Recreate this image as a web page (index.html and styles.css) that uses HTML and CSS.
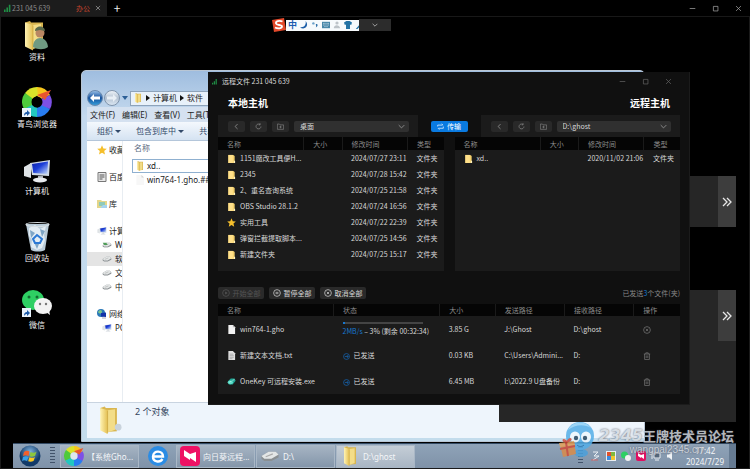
FILE: index.html
```html
<!DOCTYPE html>
<html lang="zh-CN">
<head>
<meta charset="utf-8">
<title>231 045 639</title>
<link rel="stylesheet" href="styles.css">
</head>
<body>
<svg class="defs" aria-hidden="true">
  <defs>
    <linearGradient id="gold" x1="0" x2="1"><stop offset="0" stop-color="#fff3b4"/><stop offset="1" stop-color="#e3bf52"/></linearGradient>
    <linearGradient id="screen" x1="0" x2="1" y2="1"><stop offset="0" stop-color="#0a1ca8"/><stop offset=".45" stop-color="#1c3fd8"/><stop offset="1" stop-color="#c8defa"/></linearGradient>
    <radialGradient id="orb" cy=".3"><stop offset="0" stop-color="#7fb2dc"/><stop offset="1" stop-color="#123a68"/></radialGradient>
    <linearGradient id="nav" x2="0" y2="1"><stop offset="0" stop-color="#9cc3ea"/><stop offset=".5" stop-color="#14509c"/><stop offset="1" stop-color="#37a0dc"/></linearGradient>
    <linearGradient id="navoff" x2="0" y2="1"><stop offset="0" stop-color="#f2f6fa"/><stop offset=".5" stop-color="#b4c2d2"/><stop offset="1" stop-color="#dce8f4"/></linearGradient>
  </defs>
  <symbol id="signal" viewBox="0 0 10 10"><path d="M0 7h2v3H0zM3 4.500h2V10H3zM6 1h2v9H6z"/></symbol>
  <symbol id="close" viewBox="0 0 10 10"><path d="M1.500 1.500l7 7M8.500 1.500l-7 7" fill="none" stroke="currentColor"/></symbol>
  <symbol id="max" viewBox="0 0 10 10"><path d="M2 2h6.500v6.500H2z" fill="none" stroke="currentColor"/></symbol>
  <symbol id="min" viewBox="0 0 10 10"><path d="M1 5h8" stroke="currentColor"/></symbol>
  <symbol id="back" viewBox="0 0 10 10"><path d="M6.500 1.500L3 5l3.500 3.500" fill="none" stroke="currentColor" stroke-width="1.300"/></symbol>
  <symbol id="refresh" viewBox="0 0 10 10"><path d="M8.500 5a3.500 3.500 0 1 1-1.500-2.900M5.500 3l2-.8L7 .2" fill="none" stroke="currentColor"/></symbol>
  <symbol id="newdir" viewBox="0 0 10 10"><path d="M.5 1.500h3l1 1.200h5v6.300h-9zM5 4v3.500M3.200 5.700h3.600" fill="none" stroke="currentColor" stroke-width=".9"/></symbol>
  <symbol id="down" viewBox="0 0 10 10"><path d="M1 3l4 4 4-4" fill="none" stroke="currentColor" stroke-width="1.200"/></symbol>
  <symbol id="swap" viewBox="0 0 10 10"><path d="M1 5V3h7M6.500 1L8.500 3M9 5v2.500H2M3.500 9.500L1.500 7.500" fill="none" stroke="currentColor"/></symbol>
  <symbol id="play" viewBox="0 0 10 10"><circle cx="5" cy="5" r="4.200" fill="none" stroke="currentColor" stroke-width=".9"/><path d="M4 3l3 2-3 2z" fill="currentColor"/></symbol>
  <symbol id="stop" viewBox="0 0 10 10"><circle cx="5" cy="5" r="4.200" fill="none" stroke="currentColor" stroke-width=".9"/><path d="M4 3.500v3M6 3.500v3" stroke="currentColor"/></symbol>
  <symbol id="cancel" viewBox="0 0 10 10"><circle cx="5" cy="5" r="4.200" fill="none" stroke="currentColor" stroke-width=".9"/><path d="M3.500 3.500l3 3M6.500 3.500l-3 3" stroke="currentColor" stroke-width=".9"/></symbol>
  <symbol id="sent" viewBox="0 0 10 10"><circle cx="5" cy="5" r="4.200" fill="none" stroke="currentColor" stroke-width=".9"/><path d="M2.500 5h5M5.500 3l2 2-2 2" fill="none" stroke="currentColor" stroke-width=".9"/></symbol>
  <symbol id="trash" viewBox="0 0 10 10"><path d="M1 2.500h8M3.500 2.500V1h3v1.500M2 2.500V9.300h6V2.500M4 4.300v3.200M6 4.300v3.200" fill="none" stroke="currentColor" stroke-width=".9"/></symbol>
  <symbol id="dir" viewBox="0 0 10 10"><path d="M1.500 1h6v1H8.500v8h-7z" fill="#f3cf6c"/><path d="M1.500 1h5v9h-5z" fill="#ffe08a"/><path d="M7.500 7.500h1.500V10H7.500z" fill="#fff1bd"/></symbol>
  <symbol id="page" viewBox="0 0 10 10"><path d="M1.500 0h5l2.500 2.500V10H1.500z" fill="#f2f2f2"/><path d="M6.500 0v2.500H9z" fill="#b8b8b8"/></symbol>
  <symbol id="txt" viewBox="0 0 10 10"><path d="M1.500 0h5l2.500 2.500V10H1.500z" fill="#dedede"/><path d="M3 3.500h4M3 5.200h4.500M3 7h4.500M3 8.500h3" stroke="#8a8a8a" stroke-width=".6"/></symbol>
  <symbol id="exe" viewBox="0 0 12 10"><path d="M1 5l4-4h5l1.500 3-4 5h-5z" fill="#1fa594"/><ellipse cx="4.500" cy="6" rx="3.500" ry="2.500" fill="#5fdcc8"/><path d="M3 6l3-1.500M7 3.500l3-1" stroke="#d8fff8" stroke-width=".8"/></symbol>
  <symbol id="star" viewBox="0 0 10 10"><path d="M5 .3l1.400 3.200 3.400.3-2.600 2.300.8 3.500L5 7.800 2 9.600l.8-3.500L.2 3.800l3.400-.3z" fill="currentColor"/></symbol>
  <symbol id="folder" viewBox="0 0 24 30"><path d="M3 2l5-1.500 1 1.500h12v25l-12 1z" fill="#d9b650"/><path d="M3 2l8 2.500V30l-8-4z" fill="url(#gold)"/><path d="M11 4.500l8-1v22l-8 3z" fill="#f3dd88"/><path d="M11 5v24" stroke="#c39b34" stroke-width=".6"/></symbol>
  <symbol id="pc" viewBox="0 0 28 24"><path d="M1 8l7-4v15l-7-2z" fill="#dfe3e6"/><path d="M7 4L27 1l-1 16-17-1z" fill="#cfd9e6"/><path d="M9 5l16-2.500-.7 12.500-14-.9z" fill="url(#screen)"/><path d="M15 17h5v3h-5z" fill="#aab0b8"/><ellipse cx="17" cy="21" rx="7" ry="2.500" fill="#e8ebee"/></symbol>
  <symbol id="drive" viewBox="0 0 14 8"><path d="M1 4l5-3h5l2 2v2L8 7.500H3L1 6z" fill="#8a8f92"/><path d="M1 4l5-3h5l2 2-5 3H3z" fill="#e3e6e6"/><path d="M4 4.500l5-2" stroke="#aaa" stroke-width=".8"/></symbol>
  <symbol id="ring" viewBox="0 0 30 30"><path d="M15 0A15 15 0 0 1 28 8L19 12 15 9z" fill="#f7c51c"/><path d="M15 0A15 15 0 0 0 3 6l6 7 7-5z" fill="#d8e32a"/><path d="M3 6A15 15 0 0 0 2 22l8-3 0-8z" fill="#4fca3b"/><path d="M2 22a15 15 0 0 0 13 8l1-9-6-3z" fill="#22c7c0"/><path d="M15 30a15 15 0 0 0 13-8l-8-5-5 4z" fill="#287cf0"/><path d="M28 22A15 15 0 0 0 28 8l-9 4 0 6z" fill="#7d50e6"/><circle cx="15" cy="15" r="5.500" fill="var(--hole)"/><path d="M29 3L15 8l4 2 4 3z" fill="#e8542f"/></symbol>
  <symbol id="shortcut" viewBox="0 0 9 9"><path d="M0 0h9v9H0z" fill="#e8f2fb"/><path d="M2 8C2 5 3 4 5 4V2l3 3-3 3V6C4 6 3 6.500 2 8z" fill="#1c5aa8"/></symbol>
  <symbol id="more" viewBox="0 0 10 10"><path d="M1 1l4 4-4 4M5 1l4 4-4 4" fill="none" stroke="currentColor" stroke-width="1.300"/></symbol>
</svg>

<header class="tabbar">
  <div class="tab"><svg class="i8 green"><use href="#signal"/></svg><span>231 045 639</span><em>办公</em><button aria-label="关闭标签"><svg class="i6"><use href="#close"/></svg></button></div>
  <button class="plus" aria-label="新标签">+</button>
  <div class="wincontrols">
    <button aria-label="最小化"><svg class="i7"><use href="#min"/></svg></button>
    <button aria-label="最大化"><svg class="i7"><use href="#max"/></svg></button>
    <button aria-label="关闭"><svg class="i7"><use href="#close"/></svg></button>
  </div>
</header>

<main class="desktop">
  <div class="screen">
    <ul class="shortcuts">
      <li><svg viewBox="0 0 32 32"><use href="#folder" x="1" y="0" width="24" height="31"/><circle cx="19" cy="13" r="4.500" fill="#b98763"/><path d="M14 11c0-6 10-6 10 0l-5-1z" fill="#5b6b4c"/><path d="M12 27c0-12 14-12 15 0-4 3-10 3-15 0z" fill="#6f9a82"/></svg><span>资料</span></li>
      <li><svg class="dark" viewBox="0 0 32 32"><use href="#ring" x="1" y="0" width="30" height="30"/><use href="#shortcut" x="1" y="21" width="9" height="9"/></svg><span>青鸟浏览器</span></li>
      <li><svg viewBox="0 0 32 32"><use href="#pc" x="2" y="5" width="28" height="24"/></svg><span>计算机</span></li>
      <li><svg viewBox="0 0 32 32"><path d="M5 3h23l-4 26c-4 2-10 2-14 0z" fill="#b9cbd8"/><path d="M8 7l6-3 5 4 6-3-2 9 1 5-3 8-5 2-6-3 1-7-3-4z" fill="#e3edf4"/><path d="M9 9l5 3-4 5zM19 8l5 2-3 6zM13 21l5 2-2 5z" fill="#7fa6c6"/><path d="M12 18l4-4 5 4-2 4h-5z" fill="none" stroke="#2c79d4" stroke-width="2"/><ellipse cx="16.500" cy="3.500" rx="11.500" ry="2" fill="none" stroke="#d7dee2" stroke-width="1.200"/></svg><span>回收站</span></li>
      <li><svg viewBox="0 0 32 32"><ellipse cx="12" cy="12" rx="11" ry="10" fill="#2ecf63"/><path d="M5 19l-1 5 5-3z" fill="#2ecf63"/><circle cx="8" cy="9" r="1.500" fill="#126b30"/><circle cx="16" cy="9" r="1.500" fill="#126b30"/><ellipse cx="22" cy="18" rx="9" ry="8" fill="#f3f3f3"/><path d="M25 24l4 3-1-5z" fill="#f3f3f3"/><circle cx="19" cy="16" r="1.200" fill="#777"/><circle cx="25" cy="16" r="1.200" fill="#777"/><use href="#shortcut" x="1" y="20" width="9" height="9"/></svg><span>微信</span></li>
    </ul>

    <div class="ime">
      <svg class="sogou" viewBox="0 0 14 14"><path d="M0 2l12-2 2 12-12 2z" fill="#e3492b"/><path d="M10.500 3.500C7 2 3.500 3.500 4 5.500s6 1 6 3-4 2.500-7 1" fill="none" stroke="#fff" stroke-width="1.800"/></svg>
      <div class="imebar">
        <b>中</b>
        <svg class="i8" viewBox="0 0 10 10"><path d="M7 0c5 6-1 12-7 8 5 0 8-3 7-8z" fill="#1e5fa8"/></svg>
        <svg class="i8" viewBox="0 0 10 10"><circle cx="3" cy="3" r="1.500" fill="#6aa0c8"/><path d="M6 4c3-1 3 3 0 4 1-2 0-2 0-4z" fill="#2f6fa8"/></svg>
        <svg class="i8" viewBox="0 0 10 10"><path d="M0 1h10v8H0z" fill="#4586a8"/><path d="M1.500 3h7M1.500 5h7M3 7h4" stroke="#d5e6f0" stroke-dasharray="1 .5"/></svg>
        <svg class="i8" viewBox="0 0 10 10"><circle cx="5" cy="2.500" r="2" fill="#bcc3c8"/><path d="M1 9c0-5 7-5 8 0z" fill="#bcc3c8"/></svg>
        <svg class="i8" viewBox="0 0 10 10"><path d="M0 2l3-2h4l3 2-1 3-1.500-.5V10h-5V4.500L1 5z" fill="#2272a4"/></svg>
        <svg class="i8" viewBox="0 0 10 10"><path d="M1 10l5-6V1l3-1v4L3 10z" fill="#2272a4"/></svg>
      </div>
      <button aria-label="展开"><svg class="i6"><use href="#down"/></svg></button>
    </div>

    <section class="explorer">
      <div class="address">
        <svg class="navbtn" viewBox="0 0 16 16"><circle cx="8" cy="8" r="7.500" fill="url(#nav)" stroke="#6b89ad"/><path d="M3 8l4-4v2.500h6v3H7V12z" fill="#fff"/></svg>
        <svg class="navbtn" viewBox="0 0 16 16"><circle cx="8" cy="8" r="7.500" fill="url(#navoff)" stroke="#7f93ab"/><path d="M13 8L9 4v2.500H3v3h6V12z" fill="#e9eff5"/></svg>
        <i class="tri"></i>
        <div class="path"><svg class="i10"><use href="#folder"/></svg><i class="caret"></i><span>计算机</span><i class="caret"></i><span>软件</span></div>
      </div>
      <nav class="menu"><span>文件(F)</span><span>编辑(E)</span><span>查看(V)</span><span>工具(T)</span></nav>
      <div class="tools"><span>组织 <i></i></span><span>包含到库中 <i></i></span><span>共享</span></div>
      <div class="content">
        <ul class="tree">
          <li><svg class="i10 gold"><use href="#star"/></svg>收藏夹</li>
          <li class="gap"><svg class="i10" viewBox="0 0 10 10"><path d="M1 .5h8v9H1z" fill="#e8e8e8" stroke="#777"/><path d="M2.500 3h5M2.500 5h5M2.500 7h3" stroke="#555"/></svg>百度</li>
          <li class="gap"><svg class="i10" viewBox="0 0 10 10"><path d="M0 1h4l1 1h5v7H0z" fill="#e4d68a"/><path d="M2 3h6v4H2z" fill="#8fc9b8"/><path d="M3 9l3-3h4v3z" fill="#a5d3ee"/></svg>库</li>
          <li class="gap"><svg class="i10"><use href="#pc"/></svg>计算机</li>
          <li class="sub"><svg class="i10" viewBox="0 0 14 8"><use href="#drive" width="14" height="8"/><path d="M1 1l5 0 2 3-5 0z" fill="#4f9c58"/></svg>WIN7</li>
          <li class="sub on"><svg class="i10"><use href="#drive"/></svg>软件</li>
          <li class="sub"><svg class="i10"><use href="#drive"/></svg>文档</li>
          <li class="sub"><svg class="i10"><use href="#drive"/></svg>中转</li>
          <li class="gap"><svg class="i10" viewBox="0 0 10 10"><circle cx="4" cy="4" r="4" fill="#2a78b8"/><path d="M1 3c2-3 4-2 4 0S2 5 1 3z" fill="#7cc48c"/><path d="M4 4l5-.5V8l-5-.5z" fill="#1432a8"/><path d="M5 8.500h4v1H5z" fill="#aab"/></svg>网络</li>
          <li class="sub"><svg class="i10"><use href="#pc"/></svg>PC</li>
        </ul>
        <div class="files">
          <p>名称</p>
          <div class="file sel"><svg class="i10"><use href="#folder"/></svg>xd..</div>
          <div class="file"><svg class="i10 ghost"><use href="#page"/></svg>win764-1.gho.##</div>
        </div>
      </div>
      <footer class="details"><svg viewBox="0 0 26 30"><use href="#folder" width="24" height="29"/><circle cx="22" cy="22" r="3.500" fill="#c9d3dc"/></svg><span>2 个对象</span></footer>
    </section>

    <aside class="panel upper"><button aria-label="展开"><svg class="i10"><use href="#more"/></svg></button></aside>
    <aside class="panel lower"><button aria-label="展开"><svg class="i10"><use href="#more"/></svg></button></aside>

    <section class="dialog">
      <div class="titlebar"><svg class="i7 green"><use href="#signal"/></svg><span>远程文件 231 045 639</span>
        <div class="wincontrols">
          <button aria-label="最小化"><svg class="i7"><use href="#min"/></svg></button>
          <button aria-label="最大化"><svg class="i7"><use href="#max"/></svg></button>
          <button aria-label="关闭"><svg class="i7"><use href="#close"/></svg></button>
        </div>
      </div>
      <div class="hosts"><h2>本地主机</h2><h2>远程主机</h2></div>
      <div class="bars">
        <div class="bar">
          <button aria-label="后退"><svg class="i7"><use href="#back"/></svg></button>
          <button aria-label="刷新"><svg class="i7"><use href="#refresh"/></svg></button>
          <button aria-label="新建文件夹"><svg class="i7"><use href="#newdir"/></svg></button>
          <label class="pick"><select aria-label="本地路径"><option>桌面</option></select><svg class="i7"><use href="#down"/></svg></label>
        </div>
        <button class="send"><svg class="i7"><use href="#swap"/></svg>传输</button>
        <div class="bar">
          <button aria-label="后退"><svg class="i7"><use href="#back"/></svg></button>
          <button aria-label="刷新"><svg class="i7"><use href="#refresh"/></svg></button>
          <button aria-label="新建文件夹"><svg class="i7"><use href="#newdir"/></svg></button>
          <label class="pick"><select aria-label="远程路径"><option>D:\ghost</option></select><svg class="i7"><use href="#down"/></svg></label>
        </div>
      </div>
      <div class="lists">
        <div class="list">
          <table>
            <thead><tr><th class="c-name">名称</th><th class="c-size">大小</th><th class="c-time">修改时间</th><th>类型</th></tr></thead>
            <tbody>
              <tr><td><svg class="i9"><use href="#dir"/></svg>1151魔改工具便H...</td><td></td><td>2024/07/27 23:11</td><td>文件夹</td></tr>
              <tr><td><svg class="i9"><use href="#dir"/></svg>2345</td><td></td><td>2024/07/28 15:42</td><td>文件夹</td></tr>
              <tr><td><svg class="i9"><use href="#dir"/></svg>2、重名查询系统</td><td></td><td>2024/07/25 21:58</td><td>文件夹</td></tr>
              <tr><td><svg class="i9"><use href="#dir"/></svg>OBS Studio 28.1.2</td><td></td><td>2024/07/24 16:56</td><td>文件夹</td></tr>
              <tr><td><svg class="i9 gold"><use href="#star"/></svg>实用工具</td><td></td><td>2024/07/22 22:39</td><td>文件夹</td></tr>
              <tr><td><svg class="i9"><use href="#dir"/></svg>弹窗拦截提取脚本...</td><td></td><td>2024/07/25 14:56</td><td>文件夹</td></tr>
              <tr><td><svg class="i9"><use href="#dir"/></svg>新建文件夹</td><td></td><td>2024/07/25 15:17</td><td>文件夹</td></tr>
            </tbody>
          </table>
        </div>
        <div class="list">
          <table>
            <thead><tr><th class="c-name">名称</th><th class="c-size">大小</th><th class="c-time">修改时间</th><th>类型</th></tr></thead>
            <tbody><tr><td><svg class="i9"><use href="#dir"/></svg>xd..</td><td></td><td>2020/11/02 21:06</td><td>文件夹</td></tr></tbody>
          </table>
        </div>
      </div>
      <div class="actions">
        <button disabled><svg class="i8"><use href="#play"/></svg>开始全部</button>
        <button><svg class="i8"><use href="#stop"/></svg>暂停全部</button>
        <button><svg class="i8"><use href="#cancel"/></svg>取消全部</button>
        <span>已发送<b>3</b>个文件(夹)</span>
      </div>
      <table class="queue">
        <thead><tr><th class="q-name">名称</th><th class="q-state">状态</th><th class="q-size">大小</th><th class="q-path">发送路径</th><th class="q-path">接收路径</th><th>操作</th></tr></thead>
        <tbody>
          <tr><td><svg class="i9"><use href="#page"/></svg>win764-1.gho</td><td><progress max="100" value="3" aria-label="进度"></progress><div class="rate"><b>2MB/s</b> – 3% (剩余 00:32:34)</div></td><td>3.85 G</td><td>J:\Ghost</td><td>D:\ghost</td><td><svg class="i8 dim"><use href="#cancel"/></svg></td></tr>
          <tr><td><svg class="i9"><use href="#txt"/></svg>新建文本文档.txt</td><td><svg class="i7 blue"><use href="#sent"/></svg>已发送</td><td>0.03 KB</td><td>C:\Users\Admini...</td><td>D:</td><td><svg class="i8 dim"><use href="#trash"/></svg></td></tr>
          <tr><td><svg class="i9"><use href="#exe"/></svg>OneKey 可远程安装.exe</td><td><svg class="i7 blue"><use href="#sent"/></svg>已发送</td><td>6.45 MB</td><td>I:\2022.9 U盘备份</td><td>D:</td><td><svg class="i8 dim"><use href="#trash"/></svg></td></tr>
        </tbody>
      </table>
    </section>
  </div>

  <footer class="taskbar">
    <button class="start" aria-label="开始"><svg viewBox="0 0 22 22"><circle cx="11" cy="11" r="10.500" fill="url(#orb)"/><path d="M5 7c2-1.500 4-1.500 5.500-.5L9.500 11c-2-1-3.500-1-5.500 0z" fill="#f0602c"/><path d="M11.500 7c2 1 4 1 6-.2L16 11c-2 1-4 1-5.500.3z" fill="#8cc63c"/><path d="M4 12c2-1 3.500-1 5.500 0L8 16c-2-1-3.500-1-5 0z" fill="#36a0e8"/><path d="M10.500 12.300c2 .8 4 .8 5.500-.3l-1.500 4c-2 1-3.500 1-5.300.3z" fill="#fcc81e"/></svg></button>
    <i class="grip"></i>
    <button class="task"><svg class="light" viewBox="0 0 30 30"><use href="#ring"/></svg>【系统Gho...</button>
    <button class="ie" aria-label="浏览器"><svg viewBox="0 0 20 20"><circle cx="10" cy="10" r="10" fill="#2b8ce4"/><path d="M4.500 10.500h10.500c0-6-9.500-7-10 0-.2 5.500 7 6.500 9.500 2.500" fill="none" stroke="#fff" stroke-width="2.400"/></svg></button>
    <button class="task"><svg viewBox="0 0 20 20"><rect width="20" height="20" rx="4" fill="#ee1164"/><path d="M4 4l6 4v6l-6-4zM16 16l-6-4V8l6-2z" fill="#fff"/></svg>向日葵远程...</button>
    <button class="task"><svg viewBox="0 0 14 8"><use href="#drive"/></svg>D:\</button>
    <button class="task on"><svg viewBox="0 0 24 30"><use href="#folder"/></svg>D:\ghost</button>
    <div class="tray">
      <i class="grip"></i>
      <svg class="i10" viewBox="0 0 10 10"><path d="M2 1h5l-4 4h5l-6 4" fill="none" stroke="#e9edf2"/><path d="M0 9h7" stroke="#c66"/></svg>
      <svg class="i10" viewBox="0 0 10 10"><path d="M0 0h10v10H0z" fill="#e9edf2"/><path d="M1 1h4v4H1z" fill="#e0522c"/><path d="M5 1h4v4H5z" fill="#7fb840"/><path d="M1 5h4v4H1z" fill="#3c8be0"/><path d="M5 5h4v4H5z" fill="#f2c62e"/></svg>
      <svg class="i10" viewBox="0 0 10 10"><circle cx="3.500" cy="4" r="3.500" fill="#2ecf63"/><circle cx="7" cy="7" r="3" fill="#f0f0f0"/></svg>
      <svg class="i10" viewBox="0 0 20 20"><rect width="20" height="20" rx="4" fill="#e01060"/><path d="M4 4l6 4v6l-6-4zM16 16l-6-4V8l6-2z" fill="#fff"/></svg>
      <svg class="i10" viewBox="0 0 10 10"><path d="M3 2h6v5H3zM4 9h4M1 0v8" fill="#55677c" stroke="#e9edf2"/></svg>
      <svg class="i10" viewBox="0 0 10 10"><path d="M1 3.500h2L6 1v8L3 6.500H1z" fill="#f0f3f6"/></svg>
      <div class="clock"><span>17:42</span><span>2024/7/29</span></div>
      <button class="peek" aria-label="显示桌面"></button>
    </div>
  </footer>

  <div class="mark">
    <svg viewBox="0 0 40 36"><ellipse cx="23" cy="31" rx="7" ry="4" fill="#4aa0dc"/><circle cx="22" cy="14" r="14" fill="#54aee8"/><path d="M10 8C14-1 27-2 33 6c-6-4-16-4-23 2z" fill="#8fd0f6"/><ellipse cx="17" cy="15" rx="5" ry="5.500" fill="#eef7fd"/><ellipse cx="28" cy="15" rx="5" ry="5.500" fill="#eef7fd"/><circle cx="18" cy="16" r="2.200" fill="#26465e"/><circle cx="27" cy="16" r="2.200" fill="#26465e"/><path d="M19 23c2 2 5 2 7 0" fill="none" stroke="#256ea8"/><path d="M2 22l14-2 2 12-13 3z" fill="#d98c4a"/><path d="M1 21l15-2 1 4-15 2z" fill="#e8a45c"/><path d="M8 20l2 14M2 27l15-3" stroke="#d04a3a" stroke-width="2"/><path d="M9 20c-4-5-6 0 0 0 3-6 7-2 0 0z" fill="none" stroke="#d04a3a" stroke-width="1.500"/></svg>
    <div><strong><i>2345</i>王牌技术员论坛</strong><span>wangpai2345.cn</span></div>
  </div>
</main>
</body>
</html>
```

FILE: styles.css
```css
* { box-sizing: border-box; }
body {
  margin: 0;
  min-height: 100vh;
  display: flex;
  flex-direction: column;
  background: #000;
  color: #d8d8d8;
  font: 7px/10px "Noto Sans CJK SC", "Noto Sans", sans-serif;
  overflow: hidden;
}
button, select { font: inherit; color: inherit; border: 0; padding: 0; margin: 0; background: none; }
button { display: flex; align-items: center; justify-content: center; }
ul { list-style: none; margin: 0; padding: 0; }
svg { display: block; flex: none; fill: currentColor; }
i, em { font-style: normal; }
.defs { position: absolute; width: 0; height: 0; }
.i6 { width: 6px; height: 6px; }
.i7 { width: 7px; height: 7px; }
.i8 { width: 8px; height: 8px; }
.i9 { width: 9px; height: 9px; }
.i10 { width: 10px; height: 10px; }
.green { color: #1f8f45; }
.gold { color: #f5bf2c; }
.blue { color: #1470c8; }
.dim { color: #777; }
.dark { --hole: #000; }
.light { --hole: #dde6ee; }

/* Session tabs */
.tabbar { display: flex; height: 17px; border-bottom: 1px solid #181818; }
.tab { display: flex; align-items: center; width: 107px; padding: 0 5px 0 4px; background: #1c1c1c; color: #8a8a8a; }
.tab em { margin-left: auto; margin-right: 4px; color: #c8452c; }
.tab button { width: 8px; color: #bbb; }
.plus { width: 20px; font-size: 12px; color: #eee; }
.wincontrols { display: flex; margin-left: auto; color: #777; }
.wincontrols button { width: 23px; }
.tabbar .wincontrols { color: #aaa; }

/* Remote desktop */
.desktop { position: relative; flex: 1; display: flex; flex-direction: column; border: solid #1a1a1a; border-width: 0 1px 1px; }
.screen { position: relative; flex: 1; }
.shortcuts { width: 72px; padding-top: 3px; color: #f2f2f2; font-size: 8px; text-align: center; }
.shortcuts li { height: 67px; }
.shortcuts svg { width: 32px; height: 32px; margin: 0 auto; }

.ime { position: absolute; left: 271px; top: 1px; display: flex; align-items: center; }
.sogou { width: 14px; height: 14px; }
.imebar { display: flex; align-items: center; gap: 3px; width: 73px; height: 11px; padding-left: 2px; background: #f6fafc; overflow: hidden; }
.imebar b { font-size: 9px; color: #1c5cb0; }
.ime button { width: 32px; height: 12px; background: #2c2c2c; color: #ccc; }

.explorer {
  position: absolute; left: 80px; right: 104px; top: 53px; bottom: 1px;
  display: flex; flex-direction: column;
  padding: 18px 0 3px 5px;
  border: 1px solid #b9c6d4;
  border-radius: 5px 5px 0 0;
  background: linear-gradient(#9fbddf, #c4d9ee 45px, #c3dcec);
  color: #222;
  font: 8px/12px "Noto Sans", "Noto Sans CJK SC", sans-serif;
}
.address { display: flex; align-items: center; height: 18px; gap: 1px; }
.navbtn { width: 16px; height: 16px; }
.tri { border: solid transparent; border-width: 4px 3px 0; border-top-color: #2c5f96; margin: 0 1px; }
.path { flex: 1; display: flex; align-items: center; gap: 3px; height: 15px; padding: 0 2px; border: 1px solid #8ea3ba; background: #e8f1fa; }
.caret { border: solid transparent; border-width: 3px 0 3px 4px; border-left-color: #111; }
.menu { display: flex; gap: 7px; align-items: center; height: 15px; padding-left: 3px; background: #d5e1f0; }
.tools { display: flex; gap: 15px; align-items: center; height: 19px; padding-left: 10px; background: linear-gradient(#f4f8fd, #d5e3f2); border-bottom: 1px solid #b4c6da; color: #334a6a; white-space: nowrap; }
.tools i { display: inline-block; border: solid transparent; border-width: 3px 3px 0; border-top-color: #334a6a; vertical-align: middle; }
.content { flex: 1; display: flex; background: #fff; min-height: 0; }
.tree { width: 36px; padding-top: 2px; overflow: hidden; border-right: 1px solid #e8edf2; white-space: nowrap; }
.tree li { display: flex; align-items: center; gap: 2px; height: 14px; padding-left: 10px; }
.tree .gap { margin-top: 13px; }
.tree .sub { padding-left: 15px; gap: 3px; }
.tree .on { background: #e4e4e4; }
.files { flex: 1; padding: 1px 0 0 9px; }
.files p { margin: 0 0 5px; padding-left: 2px; color: #5a6a80; }
.file { display: flex; align-items: center; gap: 2px; height: 14px; padding-left: 2px; border: 1px solid transparent; }
.file.sel { border-color: #8fb0d0; }
.ghost { opacity: .6; }
.details { display: flex; gap: 13px; height: 36px; padding: 3px 10px; border-top: 1px solid #c9d4e0; background: #eef5fc; color: #33445c; font-size: 9px; }
.details svg { width: 25px; height: 29px; }

/* Side drawers */
.panel { position: absolute; right: 13px; display: flex; justify-content: flex-end; align-items: flex-start; background: #262626; color: #e8e8e8; }
.panel button { width: 18px; height: 51px; background: #3d3d3d; }
.upper { top: 159px; width: 46px; }
.lower { top: 273px; bottom: 21px; left: 498px; }

/* File transfer dialog */
.dialog { position: absolute; left: 207px; right: 59px; top: 55px; padding: 0 9px 10px 10px; background: #101010; border: solid #1b1b1b; border-width: 0 1px 1px 0; }
.titlebar { display: flex; align-items: center; gap: 4px; height: 18px; margin-left: -6px; }
.titlebar > svg { width: 6px; }
.titlebar .wincontrols { color: #666; }
.hosts { display: flex; justify-content: space-between; align-items: center; height: 25px; padding: 0 10px; color: #fff; }
h2 { margin: 0; font-size: 10px; line-height: 14px; }
.bars { display: grid; grid-template-columns: 1fr 37px 1fr; gap: 13px; align-items: center; }
.bar { display: flex; align-items: center; gap: 5px; height: 22px; padding: 0 9px 0 10px; background: #1b1b1b; }
.bar button { width: 17px; height: 11px; border-radius: 2px; background: #292929; color: #888; }
.pick { position: relative; flex: 1; height: 11px; }
.pick select { display: block; width: 100%; height: 11px; padding-left: 6px; border-radius: 2px; background: #303030; appearance: none; }
.pick svg { position: absolute; right: 4px; top: 2px; color: #999; pointer-events: none; }
.send { gap: 3px; height: 11px; border-radius: 2px; background: #0a7ae0; color: #fff; }
.lists { display: grid; grid-template-columns: 1fr 1fr; gap: 11px; }
.list { min-height: 134px; background: #1b1b1b; }
table { width: 100%; border-collapse: collapse; table-layout: fixed; background: #1b1b1b; }
th, td { padding: 0 0 0 9px; text-align: left; font-weight: 400; white-space: nowrap; }
th { height: 13px; background: #050505; color: #8c8c8c; }
th + th { border-left: 1px solid #1a1a1a; }
td { height: 16px; }
td svg { display: inline-block; margin-right: 4px; vertical-align: -2px; }
.c-name { width: 38%; }
.c-size { width: 17%; }
.c-time { width: 29%; }
.actions { display: flex; align-items: center; gap: 5px; margin: 16px 0 5px; }
.actions button { gap: 3px; width: 46px; height: 12px; border-radius: 2px; background: #2a2a2a; }
.actions button:disabled { color: #555; }
.actions span { margin-left: auto; color: #888; }
.actions b, .rate b { font-weight: 400; color: #1878d0; }
.queue th { height: 12px; }
.queue td { height: 26px; }
.q-name { width: 25%; }
.q-state { width: 23%; }
.q-size { width: 12%; }
.q-path { width: 15%; }
progress { display: block; width: 80px; height: 2px; appearance: none; border: 0; }
progress::-webkit-progress-bar { background: #444; }
progress::-webkit-progress-value { background: #1878d0; }
.rate { margin-top: 2px; }

/* Taskbar */
.taskbar { display: flex; align-items: center; height: 25px; margin: 0 13px 0 12px; padding-left: 6px; border-top: 1px solid #334a64; background: linear-gradient(#8fa3b8, #7f92a8); color: #f4f6f8; font: 8px/11px "Noto Sans", "Noto Sans CJK SC", sans-serif; }
.start svg { width: 22px; height: 22px; }
.grip { width: 5px; height: 18px; margin: 0 5px 0 9px; background: repeating-linear-gradient(#42536a 0 1px, transparent 1px 3px); }
.task { justify-content: flex-start; gap: 3px; width: 79px; height: 23px; margin-right: 1px; padding-left: 3px; border: 1px solid #a9b7c6; background: linear-gradient(#a6b4c3, #8496aa); white-space: nowrap; overflow: hidden; }
.task svg { width: 20px; height: 20px; }
.task.on { background: linear-gradient(#c4cdd6, #a9b6c4); }
.ie { width: 36px; }
.ie svg { width: 20px; height: 20px; }
.tray { display: flex; align-items: center; gap: 5px; height: 100%; margin-left: auto; }
.tray .grip { margin: 0 3px 0 0; }
.clock { display: flex; flex-direction: column; align-items: center; margin-left: 5px; }
.peek { width: 7px; height: 24px; background: #667b92; }

.mark { position: absolute; right: 15px; bottom: 10px; display: flex; color: #d3d9df; text-shadow: 0 0 2px #445; opacity: .85; pointer-events: none; }
.mark svg { width: 40px; height: 36px; }
.mark div { display: flex; flex-direction: column; align-items: center; padding-top: 6px; }
.mark strong { font-size: 13px; line-height: 16px; }
.mark i { font: italic bold 16px/16px "DejaVu Sans", sans-serif; }
.mark span { font: 10px/12px "Liberation Sans", sans-serif; }
```
